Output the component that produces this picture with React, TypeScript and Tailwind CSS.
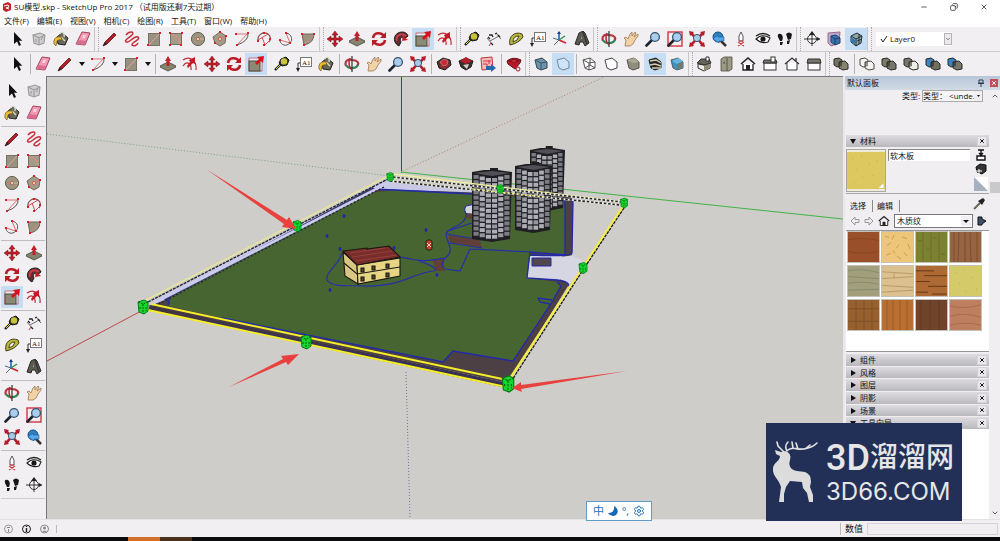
import React from "react";
import { ChevronDown, ChevronUp, Copy, Minus, Settings, X } from "lucide-react";
import clsx from "clsx";

const magnifier = (
  <>
    <path d="M7 9L1.5 14.5" stroke="#1c2430" strokeWidth="2.6" strokeLinecap="round" />
    <circle cx="10" cy="6" r="4.4" fill="#a9cdea" stroke="#33526e" strokeWidth="1.3" />
  </>
);

const corners = (points: number[][]) =>
  points.map(([x, y]) => <rect key={`${x}-${y}`} x={x - 1} y={y - 1} width="2" height="2" fill="#d8202c" />);

const crossArrows = "M8 0L11 4H9V7H12V5L16 8L12 11V9H9V12H11L8 16L5 12H7V9H4V11L0 8L4 5V7H7V4H5Z";

const solids = (a: string, b: string, edge = "#2b2b26") => (
  <>
    <path d="M1 3L6 2L9 4V10L4 11L1 9Z" fill={a} stroke={edge} />
    <path d="M6 6L12 5L15 8V13L10 14L6 12Z" fill={b} stroke={edge} />
    <path d="M6 6L9 5V10L6 11Z" fill={edge} opacity="0.6" />
  </>
);

const styleBox = (fill: string, stroke: string) => (
  <path d="M2 4L9 2L14 6V12L8 14L4 12Z" fill={fill} stroke={stroke} strokeLinejoin="round" />
);

const icons: Record<string, React.ReactNode> = {
  select: <path d="M5 1V13L8 10.5L10 15L12 14L10 9.7H13.3Z" fill="#111" />,
  component: (
    <g fill="#cfcfcf" stroke="#9b9b9b" strokeWidth="1.1">
      <path d="M2 4L9 2L14 4L13 12L8 14L3 12Z" />
      <path d="M2 4L8 7L14 4M8 7V14M5 8V11M10 9L12 6" fill="none" />
    </g>
  ),
  paint: (
    <>
      <path d="M4 6L9 2L15 7L12 14L5 13Z" fill="#696857" stroke="#222" />
      <path d="M7 3C9 0 12 2 11 6M8 6L12 10" fill="none" stroke="#d6d6c8" strokeWidth="1.5" />
      <path d="M8 6C4 5 0 7 1 13L3 15L4 10Q6 8 9 9Z" fill="#edbd2f" stroke="#524714" strokeWidth="0.6" />
    </>
  ),
  eraser: (
    <>
      <path d="M7 1L15 2L10 14L1 13Z" fill="#f399b4" stroke="#9b435f" />
      <path d="M1 13L3 9L11 10L10 14Z" fill="#d96d8d" />
      <path d="M8 4L11 4L10 7L7 7Z" fill="#fbd0dc" />
    </>
  ),
  pencil: (
    <>
      <path d="M1 15L3 11L12 2L14 4L5 13Z" fill="#b51c25" stroke="#57181b" strokeWidth="0.8" />
      <path d="M1 15L3 11L5 13Z" fill="#292421" />
    </>
  ),
  freehand: (
    <path d="M2 4C5 0 11 0 8 4C5 7 0 9 2 11C5 13 10 4 14 6C17 9 7 11 8 14C10 16 13 14 14 12" fill="none" stroke="#c8303b" strokeWidth="1.5" />
  ),
  rect: (
    <>
      <rect x="2.5" y="2.5" width="11" height="12" fill="#98917f" stroke="#777264" />
      <path d="M3 14L13 3" stroke="#e9a49c" />
      {corners([[2, 14], [14, 2]])}
    </>
  ),
  rotrect: (
    <>
      <rect x="2.5" y="2.5" width="11" height="11" fill="#a69b87" stroke="#777264" />
      <path d="M3 4Q11 4 12 13" stroke="#e68d87" fill="none" />
      {corners([[2, 2], [14, 2], [2, 14], [13, 14]])}
    </>
  ),
  circle: (
    <>
      <circle cx="8" cy="8" r="6.6" fill="#9a9480" stroke="#66604f" />
      <path d="M8 8H14" stroke="#d9b6a0" />
      <circle cx="8" cy="8" r="1.6" fill="#ecd8b5" stroke="#c33" strokeWidth="0.6" />
    </>
  ),
  polygon: (
    <>
      <path d="M8 1L14 5L13 12L8 15L3 12L1 6Z" fill="#a39a87" stroke="#7b6659" />
      <path d="M8 8L14 5" stroke="#d77" />
      <circle cx="8" cy="8" r="1.6" fill="#ecd8b5" stroke="#c33" strokeWidth="0.6" />
      {corners([[8, 1], [14, 5], [3, 12]])}
    </>
  ),
  arc: (
    <>
      <path d="M14 2Q15 10 3 14" fill="none" stroke="#555" />
      <path d="M1 3H14M3 14L14 2" stroke="#db7676" fill="none" />
      {corners([[2, 3], [14, 2], [3, 14]])}
    </>
  ),
  arc2: (
    <>
      <path d="M2 10C1 4 7 0 12 3C15 5 15 9 13 11" fill="none" stroke="#844" strokeWidth="1.2" />
      <path d="M2 9L12 3M6 6L9 14L14 9" stroke="#cf4e55" fill="none" />
      {corners([[2, 10], [8, 2], [8, 14], [14, 8]])}
    </>
  ),
  arc3: (
    <>
      <path d="M8 2C14 3 15 9 12 12C8 16 3 14 2 10" fill="none" stroke="#555" />
      <path d="M8 2L12 12L2 9" stroke="#db6a6a" fill="none" />
      {corners([[8, 2], [12, 12], [2, 9]])}
    </>
  ),
  pie: (
    <>
      <path d="M2 3H14Q14 12 4 14Z" fill="#9c9381" stroke="#6f6656" />
      <path d="M4 14L14 3" stroke="#cf8b7e" />
      {corners([[2, 3], [14, 3], [4, 14]])}
    </>
  ),
  move: <path d={crossArrows} fill="#be1e2a" stroke="#771016" strokeWidth="0.5" />,
  pushpull: (
    <>
      <path d="M0 10L8 6L16 10V11L8 15L0 11Z" fill="#85846d" stroke="#40403a" strokeWidth="0.8" />
      <path d="M8 0L11 5H9.5V10H6.5V5H5Z" fill="#c31e2a" />
    </>
  ),
  rotate: (
    <g fill="none" stroke="#b81c27" strokeWidth="2.6">
      <path d="M2 7C3 1 10 1 13 5M14 9C13 15 6 15 3 11" />
      <path d="M15 1V7H9ZM1 15V9H7Z" fill="#b81c27" stroke="none" />
    </g>
  ),
  follow: (
    <>
      <path d="M6 15C0 12 0 5 5 2C9 0 14 1 15 5L11 8C9 5 6 7 8 11Z" fill="#5b3033" stroke="#251c1c" />
      <path d="M4 10C2 5 8 1 13 5" fill="none" stroke="#cf3d48" strokeWidth="1.8" />
      <path d="M10 5L15 9L9 10Z" fill="#c81d29" />
    </>
  ),
  scale: (
    <>
      <rect x="1" y="2" width="13" height="13" fill="#e8eef4" stroke="#c2414b" strokeWidth="0.7" />
      <rect x="1" y="5" width="11" height="10" fill="#8b8a75" stroke="#4b4a40" />
      <path d="M16 0L15 7L13 5L9 9L7 7L11 3L9 1Z" fill="#d8101d" />
    </>
  ),
  offset: (
    <>
      <path d="M1 4C8 -1 15 5 14 14M1 10C5 4 10 8 9 14" fill="none" stroke="#bd303b" strokeWidth="1.2" />
      <path d="M13 1L13 8L11 7L6 12L5 10L8 6L7 4Z" fill="#c51b27" />
    </>
  ),
  tape: (
    <>
      <path d="M7 8L1 14" stroke="#1c1c14" strokeWidth="2.4" />
      <path d="M7 3L12 1L15 4L13 9L8 10L5 7Z" fill="#33332a" stroke="#181811" />
      <circle cx="10" cy="5.4" r="3.2" fill="#c9c33c" />
      <path d="M2 13L6 9" stroke="#ded330" />
    </>
  ),
  dims: (
    <>
      <path d="M1 7L6 13M10 2L15 8M4 10L13 5" fill="none" stroke="#6b6b6b" />
      <path d="M3 4H6L7 6M9 3L11 2M2 6L4 8M5 12L7 14M12 4L14 6" fill="none" stroke="#222" strokeWidth="1.3" />
      <path d="M5 12L3 15" stroke="#c33" />
    </>
  ),
  protractor: (
    <path d="M2 14C0 5 7 0 14 3L15 6Q11 12 2 14ZM5 11Q10 10 11 5Q5 5 5 11Z" fillRule="evenodd" fill="#b9b637" stroke="#42411b" />
  ),
  text: (
    <>
      <rect x="4.5" y="1.5" width="11" height="9" fill="#fff" stroke="#777" />
      <text x="6" y="9" fontSize="7" fontFamily="Liberation Serif, serif" fill="#111">A1</text>
      <path d="M4 7H2V14" fill="none" stroke="#333" />
      <path d="M0 12H4L2 16Z" fill="#222" />
    </>
  ),
  axes: (
    <>
      <path d="M7 9V1" stroke="#1868aa" strokeWidth="1.6" />
      <path d="M7 9L14 12" stroke="#cb2730" strokeWidth="1.8" />
      <path d="M7 9L13 5" stroke="#31944e" strokeWidth="1.5" />
      <path d="M7 9L2 14M7 9L1 7" stroke="#4f6f80" />
      <path d="M5 3L7 0L9 3Z" fill="#173f83" />
    </>
  ),
  text3d: (
    <>
      <path d="M5 2L9 0L11 2L15 12L11 15L9 11H6L5 14L1 13Z" fill="#5b5a52" stroke="#292924" />
      <path d="M7 5L8 8H7Z" fill="#b5b5ac" />
      <path d="M9 1L13 13" stroke="#35352f" strokeWidth="1.4" />
    </>
  ),
  orbit: (
    <g fill="none" strokeWidth="2.2">
      <path d="M2 10C0 4 5 3 8 4C13 4 16 7 13 10" stroke="#b83440" />
      <path d="M14 9C12 13 4 13 2 9" stroke="#36855a" />
      <path d="M8 0V16" stroke="#26382f" strokeWidth="1.2" />
      <path d="M6 2C4 6 5 12 8 14" stroke="#b12531" strokeWidth="1.5" />
    </g>
  ),
  hand: (
    <path d="M2 15L3 9L1 7L3 6L5 8L7 3L9 1L9 5L12 1L13 2L11 6L15 3L15 5L12 9L10 13L7 15Z" fill="#f2d3a8" stroke="#9a7752" strokeWidth="0.8" />
  ),
  zoom: magnifier,
  zoomwindow: (
    <>
      <rect x="1" y="1" width="14" height="14" fill="none" stroke="#d83341" strokeWidth="1.4" />
      {magnifier}
    </>
  ),
  extents: (
    <>
      <path d="M0 0L5 1L4 2L8 7L12 2L11 1L16 0L15 5L14 4L10 8L14 12L15 11L16 16L11 15L12 14L8 9L4 14L5 15L0 16L1 11L2 12L6 8L2 4L1 5Z" fill="#b41d29" />
      <circle cx="8" cy="7" r="3.6" fill="#a8cbe5" stroke="#3d5369" />
    </>
  ),
  previous: (
    <>
      <path d="M10 10L15 15" stroke="#38322f" strokeWidth="2.5" />
      <circle cx="7" cy="6" r="5" fill="#2e80bf" stroke="#164f86" />
      <path d="M2 8L7 4V6H13V10H8V12Z" fill="#56a7e6" stroke="#1f5f99" strokeWidth="0.6" />
    </>
  ),
  camera: (
    <>
      <path d="M8 1L10 5V10H6V5Z" fill="#fff" stroke="#555" />
      <path d="M5 11L11 15M11 11L5 15M6 10H10" stroke="#cb3b42" strokeWidth="1.2" />
    </>
  ),
  look: (
    <>
      <path d="M1 8Q7 2 15 7L13 11Q6 13 1 8Z" fill="#fff" stroke="#1d1d1d" strokeWidth="1.1" />
      <circle cx="8" cy="8" r="2.6" fill="#161616" />
      <path d="M1 5Q8 0 15 5" fill="none" stroke="#222" strokeWidth="1.4" />
    </>
  ),
  walk: (
    <path d="M1 6Q0 2 4 3Q7 5 5 10L3 10ZM3 11L6 11L5 14L3 14ZM9 3Q12 0 15 3L14 8L11 9ZM10 10L13 9L12 13L10 13Z" fill="#171717" />
  ),
  section: (
    <>
      <circle cx="8" cy="8" r="4.5" fill="#f7f7f7" stroke="#333" />
      <path d="M0 8H16M8 1V15" stroke="#333" />
      <path d="M8 0L11 4H5ZM16 8L13 6V10Z" fill="#222" />
    </>
  ),
  plane: (
    <>
      <path d="M2 2L14 1L13 12L5 15L2 12Z" fill="#b6aad3" stroke="#a7667d" />
      <path d="M5 5L10 4L14 7V12L9 14L5 11Z" fill="#3973ad" stroke="#263f70" />
      <path d="M5 5L9 8V14M9 8L14 7" stroke="#203c66" fill="none" />
    </>
  ),
  cut: (
    <>
      <path d="M3 5L9 2L14 5L13 12L8 15L3 11Z" fill="#8fa7a5" stroke="#242f37" />
      <path d="M3 5L8 8L14 5M8 8V15M11 3V13M9 10L14 8" stroke="#233643" fill="none" />
      <path d="M3 6L7 9V13L3 11Z" fill="#2d79b6" />
    </>
  ),
  warehouse: (
    <>
      <path d="M1 6L7 2L14 4L15 9L9 14L3 12Z" fill="#51322e" stroke="#25211f" />
      <path d="M4 6L8 3L12 5L11 9L7 10Z" fill="#c72934" stroke="#e28d91" strokeWidth="0.7" />
      <path d="M4 10L9 12L13 8" fill="none" stroke="#af2631" strokeWidth="1.4" />
    </>
  ),
  share: (
    <>
      <path d="M1 5L8 2L15 5L13 11L8 14L3 11Z" fill="#39312d" stroke="#222" />
      <path d="M2 5L8 1L14 5L8 8Z" fill="#b51f2c" />
      <path d="M5 9L11 8L9 13Z" fill="#d7d0cb" />
    </>
  ),
  layout: (
    <>
      <path d="M1 2L12 1L13 13L2 14Z" fill="#f3b9bc" stroke="#c8303c" />
      <path d="M3 5H11M3 8H7V12M9 4V8" stroke="#cc3741" fill="none" />
      <path d="M6 10H11V8L16 12L11 16V14H6Z" fill="#2668a9" />
    </>
  ),
  gem: (
    <>
      <path d="M1 5Q7 0 15 4L14 7L9 13L2 8Z" fill="#b71928" stroke="#67121a" />
      <path d="M3 5Q8 8 13 5Q8 2 3 5" stroke="#7d1019" fill="#d83640" />
      <circle cx="12" cy="13" r="2" fill="#eee" stroke="#b71928" />
    </>
  ),
  xray: (
    <>
      {styleBox("#6d94ac", "#314552")}
      <path d="M2 4L8 7L14 6M8 7V14" stroke="#3f596a" fill="none" />
    </>
  ),
  backedges: styleBox("#cfe5f7", "#6b8ba5"),
  wire: (
    <>
      {styleBox("#fff", "#555")}
      <path d="M2 4L8 7L14 6M8 7V14M9 2V9L4 12M9 9L14 12" stroke="#555" fill="none" />
    </>
  ),
  hidden: styleBox("#fff", "#444"),
  shaded: (
    <>
      {styleBox("#8f8e7c", "#54534a")}
      <path d="M2 4L9 2L14 6L8 7Z" fill="#aaa994" />
    </>
  ),
  textured: (
    <>
      {styleBox("#252525", "#222")}
      <path d="M3 5L9 4L14 7M3 9L8 8L14 10M5 12L14 12" stroke="#d4ccae" strokeWidth="1.4" fill="none" />
    </>
  ),
  mono: (
    <>
      {styleBox("#3d91c4", "#49656e")}
      <path d="M3 5L9 2L14 5L8 8Z" fill="#68b6df" />
      <path d="M8 14V8L14 6V12Z" fill="#717b70" />
    </>
  ),
  iso: (
    <>
      <path d="M2 8L8 9L14 7V12L8 15L2 12Z" fill="#f0eee4" stroke="#30302b" />
      <path d="M8 9L14 7V12L8 15Z" fill="#8f8e7d" />
      <path d="M1 7L5 3L13 3L15 7L8 9Z" fill="#66655a" stroke="#30302b" />
      <path d="M10 1H13V5H10Z" fill="#fff" stroke="#333" />
    </>
  ),
  top: (
    <>
      <path d="M3 3L6 1H14V13L11 15H3Z" fill="#9b9a85" stroke="#4d4c42" strokeWidth="0.8" />
      <path d="M9 2V15M7 6H6V8" fill="none" stroke="#56554a" />
    </>
  ),
  front: (
    <>
      <path d="M3 8V14H13V8" fill="#fff" stroke="#222" strokeWidth="1.3" />
      <path d="M1 8L8 2L15 8" fill="none" stroke="#222" strokeWidth="1.6" />
      <rect x="6" y="9" width="4" height="5" fill="#222" />
    </>
  ),
  right: (
    <>
      <rect x="2" y="7" width="12" height="7" fill="#fff" stroke="#333" />
      <path d="M1 7L2 4H14L15 7Z" fill="#77766a" stroke="#333" />
      <rect x="9" y="1" width="4" height="5" fill="#fff" stroke="#333" />
    </>
  ),
  back: (
    <>
      <path d="M3 7V14H13V7" fill="#fff" stroke="#333" />
      <path d="M1 8L8 2L15 8M12 5V2" fill="none" stroke="#333" strokeWidth="1.3" />
    </>
  ),
  left: (
    <>
      <rect x="2" y="7" width="12" height="7" fill="#fff" stroke="#333" />
      <path d="M1 7L2 3H14L15 7Z" fill="#77766a" stroke="#333" />
    </>
  ),
  shell: solids("#747363", "#85846f"),
  intersect: solids("#f4f4f0", "#f4f4f0", "#4b4b45"),
  union: solids("#7d7c69", "#77766a"),
  subtract: solids("#77766a", "#efefea"),
  trim: solids("#3e83bd", "#706f60"),
  split: solids("#3582c4", "#77766a"),
};

const Icon = ({ name }: { name: string }) => (
  <svg viewBox="0 0 16 16" className="h-4 w-4 shrink-0" aria-hidden="true">
    {icons[name]}
  </svg>
);

const ToolButton = ({ name, active }: { name: string; active?: boolean }) => (
  <button
    aria-label={name}
    className={clsx("flex h-[22px] w-[22px] shrink-0 items-center justify-center", active && "bg-[#c6def3]")}
  >
    <Icon name={name} />
  </button>
);

const Grip = () => (
  <div className="flex w-[5px] shrink-0 justify-between self-stretch border-l border-[#c9c7cb]">
    <span />
    <span className="border-l border-dotted border-[#aaa8ad]" />
  </div>
);

// "|" grip between bars, "/" thin rule, "_" blank gap, "v" drop-down arrow, "*" marks a pressed tool
const Tools = ({ items }: { items: string }) => (
  <>
    {items.split(" ").map((item, i) => {
      if (item === "|") return <Grip key={i} />;
      if (item === "/")
        return (
          <div key={i} className="flex h-5 w-1 shrink-0 justify-center">
            <span className="w-px bg-[#b5b3b8]" />
          </div>
        );
      if (item === "_") return <div key={i} className="w-1 shrink-0" />;
      if (item === "v")
        return (
          <button key={i} aria-label="more" className="flex w-[11px] shrink-0 items-center justify-center">
            <svg viewBox="0 0 6 4" className="h-1 w-1.5">
              <path d="M0 0H6L3 4Z" fill="#111" />
            </svg>
          </button>
        );
      return <ToolButton key={i} name={item.replace("*", "")} active={item.endsWith("*")} />;
    })}
  </>
);

const topRow =
  "select component paint eraser | pencil freehand rect rotrect circle polygon arc arc2 arc3 pie | move pushpull rotate follow scale* offset | tape dims protractor text axes text3d | orbit hand zoom zoomwindow extents previous camera look walk | section plane cut* |";
const secondRow =
  "select / eraser pencil v arc v rect v / pushpull offset move rotate scale* _ tape text paint / orbit hand zoom extents / warehouse share layout / gem | xray backedges* / wire hidden shaded textured* mono | iso top front right back left | shell / intersect union subtract trim split";
const sideGroups = [
  "select component paint eraser",
  "pencil freehand rect rotrect circle polygon arc arc2 arc3 pie",
  "move pushpull rotate follow scale* offset",
  "tape dims protractor text axes text3d",
  "orbit hand zoom zoomwindow extents previous",
  "camera look walk section",
];

const menus = ["文件(F)", "编辑(E)", "视图(V)", "相机(C)", "绘图(R)", "工具(T)", "窗口(W)", "帮助(H)"];

const Handle = ({ x, y, s = 1 }: { x: number; y: number; s?: number }) => (
  <g transform={`translate(${x} ${y}) scale(${s})`}>
    <path d="M-5 -5L1 -7L5 -5L5 4L1 7L-4 5Z" fill="#14d92c" stroke="#0b7a18" />
    <path d="M-5 -5L0 -3L5 -5M0 -3V7M-3 0V3M3 0V4" fill="none" stroke="#075e10" strokeDasharray="2 1" />
  </g>
);

const Tower = ({ x, y, w, h, rows }: { x: number; y: number; w: number; h: number; rows: number }) => {
  const cols = 6;
  const cw = (w - 3) / cols;
  const rh = (h - 12) / rows;
  const bow = [0, 1.5, 3, 3, 1.5, 0];
  return (
    <g>
      <path
        d={`M${x} ${y + 4}L${x + w * 0.3} ${y + 2}L${x + w * 0.45} ${y + 2}V${y}H${x + w * 0.65}V${y + 2}L${x + w} ${y + 4}L${x + w - 2} ${y + h - 3}L${x + w / 2} ${y + h}L${x} ${y + h - 3}Z`}
        fill="#1f1f23"
      />
      <path d={`M${x + 2} ${y + 5}L${x + w / 2} ${y + 3}L${x + w - 2} ${y + 5}L${x + w / 2} ${y + 8}Z`} fill="#505056" />
      {Array.from({ length: rows * cols }, (_, i) => {
        const c = i % cols;
        const r = Math.floor(i / cols);
        return (
          <rect
            key={i}
            x={x + 1.5 + c * cw}
            y={y + 7 + r * rh + bow[c]}
            width={cw - 1}
            height={rh - 1.3}
            fill={c < 1 || c > 4 ? "#7c7c83" : (r + c) % 3 === 0 ? "#96969e" : "#aeaeb6"}
          />
        );
      })}
    </g>
  );
};

const dots = [[344, 216], [327, 236], [340, 249], [330, 290], [426, 230], [394, 248], [437, 275]];

const Scene = () => (
  <svg viewBox="47 77 796 442" preserveAspectRatio="xMinYMin slice" className="h-full w-full" role="img" aria-label="model">
    {/* axes */}
    <path d="M401.5 77V173" stroke="#3838d0" />
    <path d="M406 372L410 519" stroke="#6f6fb4" strokeDasharray="1 2" />
    <path d="M47 361L143 310" stroke="#bb4a4a" />
    <path d="M401 172L604 77" stroke="#b97d78" strokeDasharray="1 2" />
    <path d="M47 134L390 176" stroke="#7da181" strokeDasharray="1 2" />
    <path d="M401 172L843 219" stroke="#42b345" />

    {/* base */}
    <path d="M146 305L389 178L396 182L623 204L573 200L473 192L376 190L165 306Z" fill="#c9c9e6" />
    <path d="M530 254L573 256L586 262L571 284L557 281L527 278Z" fill="#d6d5e2" />
    <path d="M148 306L165 300L376 189L570 196L573 200L572 255Q566 258 531 256L528 277L558 279Q570 282 568 286L508 383Z" fill="#4d4044" />
    <path d="M530 256L562 256Q562 268 560 280L527 278Z" fill="#d6d5e2" />
    <path d="M165 301L374 189" stroke="#3f3f6a" strokeWidth="5" />
    <path
      d="M169 298L370 193L395 190L473 194L565 200V255L530 252L527 278L557 282L561 286L552 302L513 361L453 351L443 362L222 318L169 306Z"
      fill="#476530"
    />
    <g fill="none" stroke="#2029ad" strokeWidth="1.3">
      <path d="M372 189L395 190L473 194M565 199L573 200L572 253Q570 257 531 255M565 200V255L530 252L527 278L557 280Q571 282 568 286" />
      <path d="M557 282L561 286L552 302L513 361L453 351L443 362L222 318M552 300L538 298L540 302L550 304" />
      <path d="M169 298V305" />
    </g>
    <path d="M466 206L480 203V214H467Q463 211 466 206Z" fill="#d4d4e0" stroke="#2029ad" />
    <path d="M448 235L480 240L482 248L450 242ZM432 259L444 259L443 268L445 271L436 271Z" fill="#5f3f38" />
    <path d="M466 213L478 215V220L466 218Z" fill="#5f3f38" />
    <path d="M532 258H551V266H532Z" fill="#51454e" stroke="#2029ad" />
    <path
      d="M342 253C339 265 325 272 327 280C332 288 350 285 363 286C400 288 415 272 434 271C440 269 424 260 400 257M400 257C425 263 432 260 445 258C458 250 442 237 447 232C452 226 470 224 465 211M445 258Q440 266 445 269L460 271L470 249L531 252M447 234L482 240M450 243L482 248M448 231L475 222"
      fill="none"
      stroke="#252faa"
      strokeWidth="1.2"
    />
    {dots.map(([x, y]) => (
      <ellipse key={`${x}-${y}`} cx={x} cy={y} rx="1.5" ry="2" fill="#2029ad" />
    ))}
    <rect x="426" y="240" width="6" height="10" rx="2" fill="#c63b2e" stroke="#1b2716" />
    <path d="M427 243L431 247M431 243L427 247" stroke="#ecd0b0" />

    {/* house */}
    <g stroke="#1c1713" strokeWidth="1.1">
      <path d="M343 252L357 265L358 284L345 276Z" fill="#d9c682" />
      <path d="M357 265L400 258V276L358 284Z" fill="#e7d584" />
      <path d="M343 251L367 248V249L389 246L400 257L357 265Z" fill="#792c2a" />
      <path d="M344 263L357 274L400 267" fill="none" />
      <g fill="#554c36">
        <path d="M361 268H364V272H361ZM372 266H375V270H372ZM386 264H389V268H386ZM361 277H364V281H361ZM372 275H375V279H372ZM386 273H389V277H386Z" />
      </g>
    </g>
    <path d="M350 253L385 248M352 257L392 251M356 261L397 255" stroke="#a6504a" strokeWidth="0.6" />

    <Tower x={530} y={146} w={35} h={65} rows={11} />
    <Tower x={515} y={162} w={37} h={71} rows={11} />
    <Tower x={472} y={168} w={40} h={74} rows={12} />

    {/* selection box */}
    <g fill="none">
      <path d="M146 300L388 176" stroke="#eeea8d" strokeWidth="1.2" />
      <path d="M148 302L390 178" stroke="#25253a" strokeWidth="1.4" strokeDasharray="3 1" />
      <path d="M152 304L392 181" stroke="#cbcbf1" strokeWidth="2.6" />
      <path d="M155 306L384 187" stroke="#26263a" strokeWidth="1.4" strokeDasharray="2 2" />
      <path d="M393 174L624 202" stroke="#f0eea0" strokeWidth="1.3" />
      <path d="M393 177L622 202M390 181L620 205" stroke="#eeeeda" strokeWidth="1.8" />
      <path d="M393 177L622 202M390 181L620 205" stroke="#24242b" strokeWidth="1.6" strokeDasharray="2.5 1.8" />
      <path d="M472 189L545 197" stroke="#f0eb60" strokeDasharray="3 2" />
      <path d="M149 308L505 385" stroke="#423543" strokeWidth="5" />
      <path d="M200 320L505 384" stroke="#302f70" />
      <path d="M151 304L507 380M148 310L506 387" stroke="#f4ee2b" strokeWidth="2" />
      <path d="M624 205L509 380" stroke="#f4ec4d" strokeWidth="2.4" />
      <path d="M624 208L583 270L512 380" stroke="#191919" strokeWidth="1.3" strokeDasharray="3 1" />
    </g>
    <Handle x={143} y={307} />
    <Handle x={297} y={226} s={0.8} />
    <Handle x={390} y={177} s={0.65} />
    <Handle x={500} y={189} s={0.65} />
    <Handle x={624} y={203} s={0.7} />
    <Handle x={583} y={268} s={0.8} />
    <Handle x={306} y={342} />
    <Handle x={508} y={384} s={1.15} />

    {/* callouts */}
    <g fill="#e8413f">
      <path d="M206 169L287 220L289 217L296 229L282 227L284 224Z" />
      <path d="M229 387L283 359L281 356L299 354L288 365L286 362Z" />
      <path d="M627 371L521 385L521 382L512 388L522 392L521 389Z" />
    </g>
  </svg>
);

const swatches = [
  { name: "cherry", tone: "bg-[#99502a]", grain: "M0 8Q16 5 31 9M0 20Q12 24 31 20", line: "#8a4420" },
  { name: "osb", tone: "bg-[#edc67c]", grain: "M3 4L7 6M12 3L10 8M20 5L25 7M5 14L9 11M17 13L14 17M26 12L28 18M4 24L9 22M15 25L19 28M25 25L22 21M11 19L13 22", line: "#d29b4c" },
  { name: "bamboo", tone: "bg-[#7b8130]", grain: "M7 0V31M15 0V31M23 0V31M2 9H6M10 18H14M17 6H21M25 23H29", line: "#67702a" },
  { name: "walnut", tone: "bg-[#976442]", grain: "M4 0V31M9 0L8 31M15 0V31M20 0L21 31M27 0V31", line: "#7d4d30" },
  { name: "weathered", tone: "bg-[#a29f7c]", grain: "M0 5Q15 2 31 7M0 11L31 13M0 18Q15 15 31 19M0 25L31 24", line: "#858b70" },
  { name: "pine", tone: "bg-[#dac18f]", grain: "M0 6L31 8M0 13L31 11M0 20L31 22M0 27L31 25M12 8V13", line: "#b99a68" },
  { name: "parquet", tone: "bg-[#ad6a35]", grain: "M0 5H18M8 10H31M0 16H14M12 21H31M0 27H12M16 29H31", line: "#673915" },
  { name: "cork", tone: "bg-[#d4ca6a]", grain: "M5 7H6M14 4H15M22 12H23M9 18H10M26 24H27M15 26H16", line: "#bcae50" },
  { name: "veneer", tone: "bg-[#96602f]", grain: "M8 0V31M16 0V31M24 0V31M0 9H31M0 22H31", line: "#805026" },
  { name: "oak", tone: "bg-[#b96f31]", grain: "M5 0V31M11 0V31M18 0V31M25 0V31", line: "#9e5a22" },
  { name: "mahogany", tone: "bg-[#70442a]", grain: "M5 0V31M14 0V31M23 0V31", line: "#633a24" },
  { name: "plywood", tone: "bg-[#bd7f60]", grain: "M0 6Q12 10 31 5M0 17Q14 12 31 18M0 26Q16 22 31 26", line: "#ab6b4e" },
];

const PanelHeader = ({ title, open }: { title: string; open?: boolean }) => (
  <div className="flex items-center bg-linear-to-b from-[#dedce0] to-[#b9b8bd] pr-0.5 pl-1">
    <button className="flex flex-1 items-center gap-1 leading-3">
      <svg viewBox="0 0 6 6" className="h-1.5 w-1.5">
        <path d={open ? "M0 1H6L3 6Z" : "M1 0L6 3L1 6Z"} fill="#111" />
      </svg>
      {title}
    </button>
    <button aria-label={`close ${title}`} className="flex h-2.5 w-2.5 items-center justify-center border border-[#d5d3d8] bg-[#e9e7ea]">
      <X className="h-1.5 w-1.5" strokeWidth={4} />
    </button>
  </div>
);

const SidePanel = () => (
  <aside className="flex w-[157px] shrink-0 flex-col border-l-2 border-[#e9e8ea] bg-[#f0eef1]">
    <div className="flex h-[14px] shrink-0 items-center gap-1.5 bg-linear-to-b from-[#b8c6d7] to-[#d2dbe6] px-0.5">
      <h2 className="flex-1">默认面板</h2>
      <svg viewBox="0 0 6 8" className="h-2 w-1.5">
        <path d="M1 1H5V4H1ZM3 4V8M0 4.500H6" fill="none" stroke="#26384e" />
      </svg>
      <button aria-label="close panel" className="flex h-2 w-2 items-center justify-center bg-[#c84b58] text-white">
        <X className="h-1.5 w-1.5" strokeWidth={4} />
      </button>
    </div>
    <div className="flex min-h-0 flex-1">
      <div className="flex min-w-0 flex-1 flex-col pl-px">
        <div className="mb-[33px] flex h-3 items-center justify-end gap-0.5 pr-1.5">
          <label htmlFor="kind">类型:</label>
          <div className="relative w-[61px]">
            <select id="kind" className="block h-3 w-full appearance-none border border-[#aaa] bg-[#f5f4f6] leading-[10px]">
              <option>类型： &lt;unde...</option>
            </select>
            <svg viewBox="0 0 8 10" className="pointer-events-none absolute top-px right-px h-2.5 w-2 bg-[#f0eef1]">
              <path d="M3 4H6L4.500 6Z" fill="#111" />
            </svg>
          </div>
        </div>
        <div className="grid h-3 shrink-0">
          <PanelHeader title="材料" open />
        </div>
        <div className="flex h-[47px] shrink-0 gap-0.5 border-b border-[#a6a4a8] pt-0.5">
          <div className="h-[43px] w-10 border border-[#aaa89e] bg-[#eeebda] py-0.5">
            <svg viewBox="0 0 38 38" className="h-full w-full bg-[#dcc85f]">
              <path d="M5 7H6M14 4H15M22 12H23M9 18H10M26 24H27M15 26H16M30 9H31M6 31H7M22 33H23" stroke="#c6af45" />
              <path d="M37 32V37H32Z" fill="#fff" />
            </svg>
          </div>
          <input aria-label="name" defaultValue="软木板" className="h-3 w-[82px] border-t border-l border-[#888] bg-white px-px" />
          <div className="flex flex-1 flex-col items-center gap-0.5">
            <svg viewBox="0 0 10 12" className="h-3 w-2.5">
              <path d="M2 1H8M5 1V6M3 4L5 6L7 4M1 7H9V11H1Z" fill="#fff" stroke="#111" strokeWidth="1.4" />
            </svg>
            <svg viewBox="0 0 12 12" className="h-3 w-3">
              <path d="M1 4L5 1L11 2V8L7 11L2 9Z" fill="#333" stroke="#111" />
              <path d="M4 6V11M1 8H7" stroke="#fff" />
            </svg>
            <svg viewBox="0 0 14 14" className="h-3.5 w-3.5">
              <rect width="14" height="14" fill="#fff" />
              <path d="M0 0V14H14Z" fill="#a6b1bd" />
            </svg>
          </div>
        </div>
        <div className="flex h-[18px] shrink-0 items-end gap-1 pr-1 pl-1" role="tablist">
          <button role="tab" className="border-r border-[#888] pr-1.5 leading-3">选择</button>
          <button role="tab" className="border-r border-[#888] pr-1.5 leading-3">编辑</button>
          <svg viewBox="0 0 12 12" className="mb-0.5 ml-auto h-3 w-3">
            <path d="M1 11L7 5" stroke="#665" strokeWidth="2" />
            <path d="M5 3L9 7L12 2L10 0Z" fill="#222" />
          </svg>
        </div>
        <div className="flex h-[18px] shrink-0 items-center gap-1 pr-0.5 pl-1">
          <button aria-label="back">
            <svg viewBox="0 0 10 10" className="h-2.5 w-2.5">
              <path d="M1 5L5 1V3.500H9V6.500H5V9Z" fill="none" stroke="#999" />
            </svg>
          </button>
          <button aria-label="forward">
            <svg viewBox="0 0 10 10" className="h-2.5 w-2.5">
              <path d="M9 5L5 1V3.500H1V6.500H5V9Z" fill="none" stroke="#999" />
            </svg>
          </button>
          <button aria-label="home">
            <svg viewBox="0 0 16 16" className="h-3 w-3">{icons.front}</svg>
          </button>
          <div className="relative min-w-0 flex-1">
            <select aria-label="collection" className="block h-[14px] w-full appearance-none border border-[#777] bg-white px-0.5">
              <option>木质纹</option>
            </select>
            <svg viewBox="0 0 10 10" className="pointer-events-none absolute top-0.5 right-0.5 h-2.5 w-2.5 bg-[#f0eef1]">
              <path d="M2 4H8L5 7Z" fill="#111" />
            </svg>
          </div>
          <button aria-label="details">
            <svg viewBox="0 0 10 10" className="h-2.5 w-2.5">
              <path d="M1 1H5V3L9 5L5 8V9H1Z" fill="#3c5167" stroke="#111" />
            </svg>
          </button>
        </div>
        <div className="mb-0.5 h-[122px] shrink-0 border-t border-b border-[#97959a] bg-white px-px">
          <div className="grid w-fit grid-cols-4 gap-x-px gap-y-0.5">
            {swatches.map((s) => (
              <button key={s.name} aria-label={s.name} className={clsx("h-8 w-[33px] border border-[#c4c0ba]", s.tone)}>
                <svg viewBox="0 0 31 31" preserveAspectRatio="none" className="h-full w-full">
                  <path d={s.grain} stroke={s.line} fill="none" />
                </svg>
              </button>
            ))}
          </div>
        </div>
        <div className="grid h-[75px] shrink-0 grid-rows-6 gap-px">
          <PanelHeader title="组件" />
          <PanelHeader title="风格" />
          <PanelHeader title="图层" />
          <PanelHeader title="阴影" />
          <PanelHeader title="场景" />
          <PanelHeader title="工具向导" open />
        </div>
        <div className="flex-1 bg-white" />
      </div>
      <div className="flex w-[11px] shrink-0 flex-col items-center py-0.5">
        <ChevronUp className="h-2 w-2" />
        <div className="mt-[82px] h-[11px] w-2.5 bg-[#c9c8ca]" />
        <ChevronDown className="mt-auto h-2 w-2" />
      </div>
    </div>
  </aside>
);

const Watermark = () => (
  <div className="absolute right-[38px] bottom-5 flex h-[98px] w-[196px] items-center bg-[#223058] pl-1.5 text-[#e6e6e6]">
    <svg viewBox="0 0 46 64" className="h-16 w-[46px] shrink-0" fill="#dcdcdc">
      <path d="M3 10L9 12L13 11Q20 13 18 20C16 26 19 30 25 31L33 32Q39 34 39 42L38 47L41 55V62H37L35 53L31 48L30 42L18 41L14 47L12 54V62H7L9 47C7 39 0 36 1 28C2 22 8 21 8 16L4 14Z" />
      <path d="M12 12L6 6L5 2M15 11Q12 6 16 2M16 10C21 6 24 10 31 9Q40 8 45 3M21 8L20 2M26 9L24 3M33 9L38 5" fill="none" stroke="#e2e2e2" strokeWidth="1.6" strokeLinecap="round" />
    </svg>
    <div className="flex flex-col pl-2 whitespace-nowrap">
      <div className="flex items-center font-['Roboto','Noto_Sans_CJK_SC',sans-serif] text-[28px] leading-10 font-medium">
        <span className="text-[36px]">3D</span>
        <span>溜溜网</span>
      </div>
      <span className="font-['Inter',sans-serif] text-[24px] leading-7">3D66.COM</span>
    </div>
  </div>
);

const App = () => {
  return (
    <div className="relative flex h-screen flex-col overflow-hidden bg-[#f1eff2] font-['Open_Sans','Noto_Sans_CJK_SC',sans-serif] text-[8px] leading-3 text-[#111]">
      <header className="flex h-[14px] shrink-0 items-center bg-white pr-3 pl-0.5">
        <svg viewBox="0 0 10 10" className="mr-0.5 h-2.5 w-2.5">
          <path d="M1 2L6 0L9 2V8L4 10L1 8Z" fill="#c9202c" />
          <path d="M2 4L6 3L7 5L4 6L7 7" stroke="#fff" fill="none" />
        </svg>
        <h1 className="flex-1">SU模型.skp - SketchUp Pro 2017 （试用版还剩7天过期）</h1>
        <div className="flex gap-[22px]">
          <button aria-label="minimize"><Minus className="h-2 w-2" /></button>
          <button aria-label="restore"><Copy className="h-2 w-2 rotate-90" /></button>
          <button aria-label="close"><X className="h-2 w-2" /></button>
        </div>
      </header>
      <nav className="flex h-[13px] shrink-0 items-center gap-2 bg-white pl-1">
        {menus.map((m) => (
          <button key={m}>{m}</button>
        ))}
      </nav>

      <div className="flex h-[25px] shrink-0 items-center border-b border-[#cecccf] pl-1.5">
        <Tools items={topRow} />
        <div className="relative ml-1 w-[76px]">
          <select aria-label="layer" className="block h-[14px] w-full appearance-none bg-white pl-3.5">
            <option>Layer0</option>
          </select>
          <svg viewBox="0 0 8 8" className="pointer-events-none absolute top-[3px] left-1 h-2 w-2">
            <path d="M1 4L3 7L7 1" fill="none" stroke="#222" />
          </svg>
          <ChevronDown className="pointer-events-none absolute top-px right-0 h-3 w-2 border border-[#b5b3b8] bg-[#eceaec]" />
        </div>
      </div>
      <div className="flex h-[24px] shrink-0 items-center pl-1.5">
        <Tools items={secondRow} />
      </div>

      <main className="flex min-h-0 flex-1">
        <div className="w-[46px] shrink-0 px-px pt-1">
          {sideGroups.map((group, i) => (
            <div key={group}>
              {i > 0 && (
                <div className="flex h-1 items-center">
                  <span className="h-px w-full bg-[#bfbdc1]" />
                </div>
              )}
              <div className="grid grid-cols-2">
                <Tools items={group} />
              </div>
            </div>
          ))}
          <div className="mt-0.5 border-b border-[#cecccf]" />
        </div>
        <div className="min-w-0 flex-1 border-t border-l border-[#77777b] bg-[#cecdc9]">
          <Scene />
        </div>
        <SidePanel />
      </main>

      <footer className="flex h-[18px] shrink-0 items-center gap-2 border-t border-[#e3e1e4] pr-0.5 pl-1">
        <svg viewBox="0 0 56 10" className="h-2.5 w-14" fill="none">
          <circle cx="4.500" cy="5" r="4" stroke="#999" />
          <path d="M4.500 5V8M3 3.500H6" stroke="#888" />
          <circle cx="22.500" cy="5" r="4" stroke="#222" />
          <path d="M22.500 2V3M22.500 4V8" stroke="#222" strokeWidth="1.5" />
          <circle cx="40.500" cy="5" r="4" stroke="#888" />
          <circle cx="40.500" cy="4" r="1.500" fill="#888" />
          <path d="M38 8Q40.500 5 43 8Z" fill="#888" />
          <path d="M52.500 1V9" stroke="#bbb" />
        </svg>
        <div className="ml-auto flex items-center gap-1 border-l border-[#bbb] pl-1 text-[9px]">
          <label htmlFor="measure">数值</label>
          <input id="measure" className="h-3 w-[131px] border border-[#d5d3d7] bg-[#f0eef1]" />
        </div>
      </footer>
      <div className="flex h-1 shrink-0 bg-[#0b0b0d] pl-32">
        <span className="w-8 bg-[#d2712e]" />
        <span className="w-8 bg-[#49311f]" />
      </div>

      <div className="absolute bottom-5 left-[586px] flex h-5 w-[66px] items-center justify-around border border-[#5c9dcc] bg-white px-1 text-[11px] text-[#2371b5]">
        <span>中</span>
        <svg viewBox="0 0 10 10" className="h-2.5 w-2.5">
          <path d="M6 0C12 3 10 10 5 10Q2 10 0 7Q7 7 6 0Z" fill="#1769b5" />
        </svg>
        <span>°,</span>
        <Settings className="h-3 w-3" />
      </div>
      <Watermark />
    </div>
  );
};

export default App;
